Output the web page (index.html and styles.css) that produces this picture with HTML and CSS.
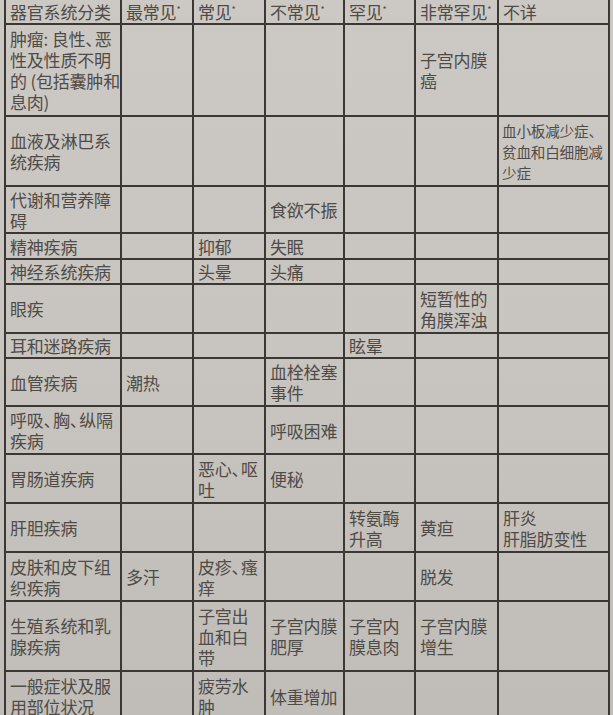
FILE: index.html
```html
<!DOCTYPE html>
<html lang="zh">
<head>
<meta charset="utf-8">
<link rel="stylesheet" href="styles.css">
</head>
<body>
<table class="ae">
  <colgroup>
    <col class="c1"><col class="c2"><col class="c3"><col class="c4"><col class="c5"><col class="c6"><col class="c7">
  </colgroup>
  <tr class="h">
    <td>器官系统分类</td><td>最常见<sup>*</sup></td><td>常见<sup>*</sup></td><td>不常见<sup>*</sup></td><td>罕见<sup>*</sup></td><td>非常罕见<sup>*</sup></td><td>不详</td>
  </tr>
  <tr class="r1">
    <td>肿瘤: 良性<span class="p">、</span>恶<br>性及性质不明<br>的 (包括囊肿和<br>息肉)</td><td></td><td></td><td></td><td></td><td>子宫内膜<br>癌</td><td></td>
  </tr>
  <tr class="r2">
    <td>血液及淋巴系<br>统疾病</td><td></td><td></td><td></td><td></td><td></td><td class="sm">血小板减少症<span class="p">、</span><br>贫血和白细胞减<br>少症</td>
  </tr>
  <tr class="r3">
    <td>代谢和营养障<br>碍</td><td></td><td></td><td>食欲不振</td><td></td><td></td><td></td>
  </tr>
  <tr class="r4">
    <td>精神疾病</td><td></td><td>抑郁</td><td>失眠</td><td></td><td></td><td></td>
  </tr>
  <tr class="r5">
    <td>神经系统疾病</td><td></td><td>头晕</td><td>头痛</td><td></td><td></td><td></td>
  </tr>
  <tr class="r6">
    <td>眼疾</td><td></td><td></td><td></td><td></td><td>短暂性的<br>角膜浑浊</td><td></td>
  </tr>
  <tr class="r7">
    <td>耳和迷路疾病</td><td></td><td></td><td></td><td>眩晕</td><td></td><td></td>
  </tr>
  <tr class="r8">
    <td>血管疾病</td><td>潮热</td><td></td><td>血栓栓塞<br>事件</td><td></td><td></td><td></td>
  </tr>
  <tr class="r9">
    <td>呼吸<span class="p">、</span>胸<span class="p">、</span>纵隔<br>疾病</td><td></td><td></td><td>呼吸困难</td><td></td><td></td><td></td>
  </tr>
  <tr class="r10">
    <td>胃肠道疾病</td><td></td><td>恶心<span class="p">、</span>呕<br>吐</td><td>便秘</td><td></td><td></td><td></td>
  </tr>
  <tr class="r11">
    <td>肝胆疾病</td><td></td><td></td><td></td><td>转氨酶<br>升高</td><td>黄疸</td><td>肝炎<br>肝脂肪变性</td>
  </tr>
  <tr class="r12">
    <td>皮肤和皮下组<br>织疾病</td><td>多汗</td><td>皮疹<span class="p">、</span>瘙<br>痒</td><td></td><td></td><td>脱发</td><td></td>
  </tr>
  <tr class="r13">
    <td>生殖系统和乳<br>腺疾病</td><td></td><td>子宫出<br>血和白<br>带</td><td>子宫内膜<br>肥厚</td><td>子宫内<br>膜息肉</td><td>子宫内膜<br>增生</td><td></td>
  </tr>
  <tr class="r14">
    <td>一般症状及服<br>用部位状况</td><td></td><td>疲劳水<br>肿</td><td>体重增加</td><td></td><td></td><td></td>
  </tr>
</table>
</body>
</html>
```

FILE: styles.css
```css
html, body {
  margin: 0;
  padding: 0;
}
body {
  width: 613px;
  height: 715px;
  overflow: hidden;
  background: linear-gradient(180deg, #ccc9c4 0%, #c8c5c0 50%, #c0bdb8 100%);
  font-family: "Noto Sans CJK SC", "Noto Sans", sans-serif;
  color: #4f4b47;
}
.ae {
  border-collapse: collapse;
  table-layout: fixed;
  width: 604px;
  margin: -2px 0 0 4px;
  font-size: 17px;
  line-height: 21px;
  letter-spacing: -0.2px;
}
.ae td {
  border: 2px solid #3b3733;
  padding: 0 0 0 4px;
  vertical-align: middle;
  white-space: nowrap;
}
.p {
  letter-spacing: -0.45em;
}
.c1 { width: 116px; }
.c2 { width: 72px; }
.c3 { width: 72px; }
.c4 { width: 79px; }
.c5 { width: 71px; }
.c6 { width: 83px; }
.c7 { width: 111px; }
sup {
  font-size: 9px;
  line-height: 0;
  vertical-align: 6px;
}
.ae td.sm {
  font-size: 14.6px;
  line-height: 21px;
  padding-left: 3px;
}
.h { height: 25px; }
.r1 { height: 92px; }
.r2 { height: 70px; }
.r3 { height: 47px; }
.r4 { height: 26px; }
.r5 { height: 25px; }
.r6 { height: 49px; }
.r7 { height: 25px; }
.r8 { height: 48px; }
.r9 { height: 48px; }
.r10 { height: 49px; }
.r11 { height: 49px; }
.r12 { height: 49px; }
.r13 { height: 70px; }
.r14 { height: 50px; }
```
